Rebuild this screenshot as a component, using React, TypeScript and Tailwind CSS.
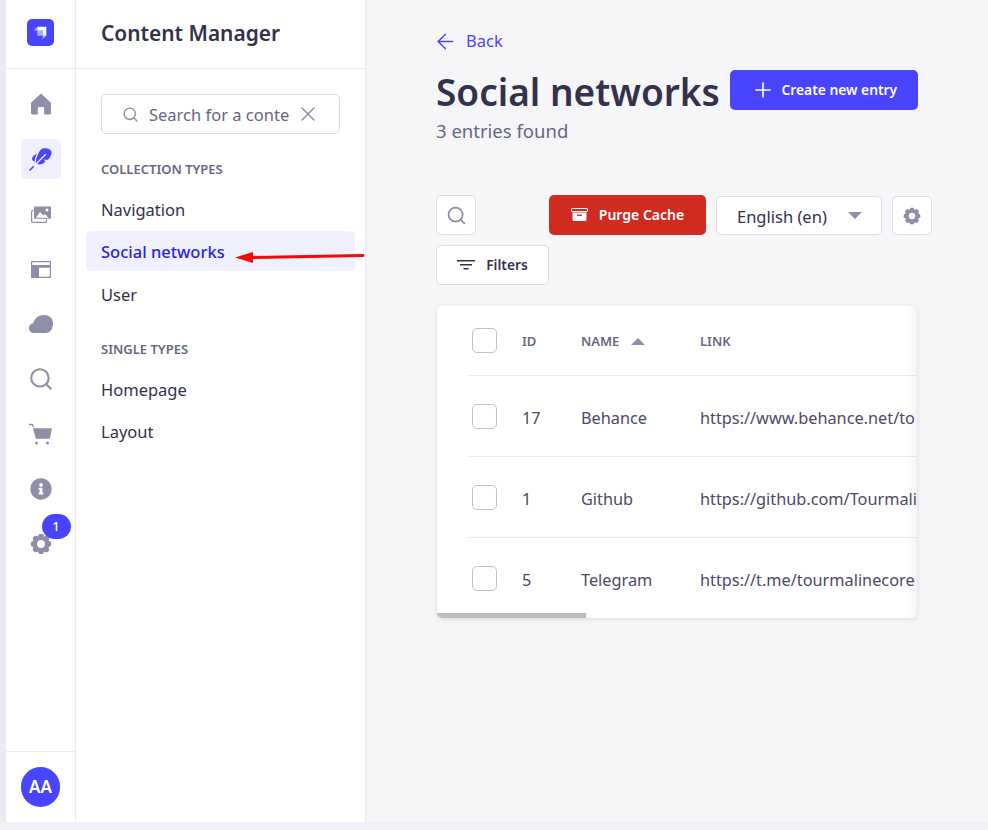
import { ArrowLeft, Plus, Search, X } from "lucide-react";
import { FaInfoCircle } from "react-icons/fa";

const railIcon = "h-[22px] w-[22px] text-[#8e8ea9]";

function HomeIcon() {
  return (
    <svg viewBox="0 0 24 24" className="h-[24px] w-[24px] text-[#8e8ea9]" fill="currentColor">
      <path d="M12 1.600 2.600 10.200c-.4.4-.6.8-.6 1.300v9.600c0 .8.6 1.400 1.400 1.400h5.400v-6.200c0-.8.6-1.400 1.400-1.400h3.600c.8 0 1.400.6 1.400 1.400v6.200h5.400c.8 0 1.400-.6 1.400-1.400v-9.600c0-.5-.2-.9-.6-1.300L12 1.600z" />
    </svg>
  );
}

function FeatherIcon() {
  return (
    <svg viewBox="0 0 24 24" className="h-[24px] w-[24px] text-[#4945ff]" fill="none">
      <path fill="currentColor" d="M13.500 1.500c4-1 8.600.4 9 3.600.3 2.800-1.500 6-3.700 7.600h-4.600l2.400 1.500c-1 1.400-3 3-5.400 3.200-1.700.1-3.500-.5-4.400-1.300 0-3 .8-6.400 2.400-9.200 1.200-2.600 2.600-4.800 4.300-5.400z" />
      <path fill="currentColor" d="M4.500 8.800 8 6.400c-1.400 2.600-2.400 5.800-2.500 8.600L3.200 13c-.4-1.600.2-3 1.300-4.200z" />
      <path stroke="currentColor" strokeWidth="1.600" strokeLinecap="round" d="M1 23 5 19" />
      <path stroke="#fff" strokeWidth="1.300" strokeLinecap="round" d="M5 19 16.500 7.500" />
    </svg>
  );
}

function MediaIcon() {
  return (
    <svg viewBox="0 0 20 17" className="h-[17px] w-[20px] text-[#8e8ea9]" fill="none">
      <rect x=".6" y="4.600" width="15" height="11.800" rx="1" stroke="currentColor" strokeWidth="1.200" />
      <rect x="2.400" y=".2" width="17.600" height="13.300" rx="1" fill="#fff" />
      <path fill="currentColor" d="M4 .6h15c.6 0 1 .4 1 1v10.200c0 .6-.4 1-1 1H4c-.6 0-1-.4-1-1V1.600c0-.6.4-1 1-1z" />
      <circle cx="16" cy="4" r="1.500" fill="#fff" />
      <path fill="#fff" d="M5 11.800 9 6l3.500 3.600 1.600-1.400 3.400 3.600z" />
    </svg>
  );
}

function LayoutIcon() {
  return (
    <svg viewBox="0 0 20 17" className="h-[17px] w-[20px] text-[#8e8ea9]" fill="none">
      <path fill="currentColor" d="M1 0h18c.6 0 1 .4 1 1v15c0 .6-.4 1-1 1H1c-.6 0-1-.4-1-1V1c0-.6.4-1 1-1z" />
      <path fill="#fff" d="M1.200 1.300h17.600v2.700H1.200zM8 6.800h10.800v9H8z" />
    </svg>
  );
}

function CloudIcon() {
  return (
    <svg viewBox="0 0 24 18" className="h-[18px] w-[24px] text-[#8e8ea9]" fill="currentColor">
      <path d="M15 0c5 0 9 3 9 8.500 0 5.500-3.200 9.500-7 9.500H5c-2.800 0-5-1.800-5-4.800 0-2.700 1.700-4.700 4.200-5C5.500 3.400 9.500 0 15 0z" />
    </svg>
  );
}

function CartIcon() {
  return (
    <svg viewBox="0 0 23 22" className="h-[22px] w-[23px] text-[#8e8ea9]" fill="currentColor">
      <path d="M0 .8h3c.6 0 1 .3 1.200.8L5 4h-1.400l-.6-1.700H0z" />
      <path d="M3.800 5.200H23l-2.200 10.600H7z" />
      <circle cx="7.500" cy="20" r="1.500" />
      <circle cx="18.500" cy="20" r="1.500" />
    </svg>
  );
}

function CogIcon({ size }: { size: string }) {
  const teeth = [0, 45, 90, 135, 180, 225, 270, 315];
  return (
    <svg viewBox="0 0 24 24" className={`${size} text-[#8e8ea9]`} fill="currentColor">
      {teeth.map((a) => (
        <rect key={a} x="9" y="1" width="6" height="22" rx="2.500" transform={`rotate(${a} 12 12)`} />
      ))}
      <circle cx="12" cy="12" r="8.500" />
      <circle cx="12" cy="12" r="4.300" fill="#fff" />
    </svg>
  );
}

function LogoIcon() {
  return (
    <div className="flex h-[27px] w-[27px] items-center justify-center rounded-[5px] bg-[#4945ff]">
      <svg viewBox="0 0 16 16" className="h-[17px] w-[17px]">
        <path fill="#fff" d="M5 2.500h8.500V11H10V6H5z" />
        <path fill="#fff" opacity=".55" d="M5 2.500V6H1.500zM10 6H5v5h5zM10 11v3.500L13.500 11z" />
      </svg>
    </div>
  );
}

function PurgeIcon() {
  return (
    <svg viewBox="0 0 17 13" className="h-[13px] w-[17px]">
      <rect x=".5" y=".5" width="16" height="3" rx=".6" fill="none" stroke="#fff" />
      <path fill="#fff" d="M1.500 4.500h14v7.300c0 .7-.5 1.200-1.200 1.200H2.700c-.7 0-1.200-.5-1.200-1.200z" />
      <rect x="6" y="6.600" width="5" height="1.300" fill="#d02b20" />
    </svg>
  );
}

function RailItem({ children, active }: { children: React.ReactNode; active?: boolean }) {
  return (
    <div className={`relative flex h-10 w-10 items-center justify-center rounded-[5px] ${active ? "bg-[#f0f0ff]" : ""}`}>
      {children}
    </div>
  );
}

function NavGroup({ title, items }: { title: string; items: string[] }) {
  return (
    <div>
      <p className="pl-[15px] text-[13px] leading-[20px] font-semibold text-[#666687]">{title}</p>
      <div className="mt-[9px] flex flex-col gap-[2.500px]">
        {items.map((item) => (
          <div
            key={item}
            className={`flex h-10 items-center rounded-[5px] pt-[4px] pl-[15px] text-[16.500px] ${
              item === "Social networks" ? "bg-[#f0f0ff] font-medium text-[#271fe0]" : "text-[#32324d]"
            }`}
          >
            {item}
          </div>
        ))}
      </div>
    </div>
  );
}

function Checkbox() {
  return <div className="h-[25px] w-[25px] shrink-0 rounded-[5px] border border-[#c0c0cf] bg-white" />;
}

const rows = [
  { id: "17", name: "Behance", link: "https://www.behance.net/to" },
  { id: "1", name: "Github", link: "https://github.com/Tourmali" },
  { id: "5", name: "Telegram", link: "https://t.me/tourmalinecore" },
];

export default function App() {
  return (
    <div className="flex h-[830px] w-[988px] flex-col overflow-hidden bg-[#f0f1f6] font-['Noto_Sans',sans-serif] text-[#32324d]">
      <div className="flex h-[822px]">
        <div className="w-1.5 bg-[#e8ebf5]" />

        {/* main rail */}
        <aside className="flex w-[70px] flex-col border-r border-[#eaeaef] bg-white">
          <div className="flex h-[69px] items-center justify-center border-b border-[#eaeaef] pb-[4px]">
            <LogoIcon />
          </div>
          <nav className="flex flex-1 flex-col items-center gap-[15px] pt-[15px]">
            <RailItem><HomeIcon /></RailItem>
            <RailItem active><FeatherIcon /></RailItem>
            <RailItem><MediaIcon /></RailItem>
            <RailItem><LayoutIcon /></RailItem>
            <RailItem><CloudIcon /></RailItem>
            <RailItem><Search className="h-[26px] w-[26px] text-[#8e8ea9]" strokeWidth={1.900} /></RailItem>
            <RailItem><CartIcon /></RailItem>
            <RailItem><FaInfoCircle className={railIcon} /></RailItem>
            <RailItem>
              <CogIcon size="h-[22px] w-[22px]" />
              <span className="absolute top-[-10px] right-[-10px] flex h-[25px] w-[29px] items-center justify-center rounded-full bg-[#4945ff] text-[13px] font-medium text-white">
                1
              </span>
            </RailItem>
          </nav>
          <div className="flex h-[71px] items-center justify-center border-t border-[#eaeaef]">
            <div className="flex h-10 w-[39px] items-center justify-center rounded-full bg-[#4945ff] text-[17px] font-semibold text-white">
              AA
            </div>
          </div>
        </aside>

        {/* sub nav */}
        <aside className="relative flex w-[290px] flex-col border-r border-[#eaeaef] bg-white">
          <div className="flex h-[69px] items-center border-b border-[#eaeaef] pl-[25px]">
            <h2 className="text-[20.900px] font-semibold">Content Manager</h2>
          </div>
          <div className="mx-[25px] mt-[25px] flex h-10 w-[239px] items-center rounded-[5px] border border-[#dcdce4] pl-[20px] text-[16.500px] text-[#666687]">
            <Search className="h-[17px] w-[17px] shrink-0 text-[#8e8ea9]" strokeWidth={2} />
            <span className="ml-[10px] w-[141px] pt-[2px] whitespace-nowrap">Search for a conte</span>
            <X className="ml-[6px] h-[24px] w-[24px] text-[#8e8ea9]" strokeWidth={1.500} />
          </div>
          <div className="mx-[10px] mt-[25px] flex flex-col gap-[26px]">
            <NavGroup title="COLLECTION TYPES" items={["Navigation", "Social networks", "User"]} />
            <NavGroup title="SINGLE TYPES" items={["Homepage", "Layout"]} />
          </div>
          {/* red annotation arrow */}
          <svg className="absolute top-[248px] left-[158px]" width="132" height="18" viewBox="0 0 132 18">
            <path d="M129 7.500 18 9.500" stroke="#f20a0a" strokeWidth="3" strokeLinecap="round" />
            <path d="M1 9.500 19 4v11z" fill="#f20a0a" />
          </svg>
        </aside>

        {/* content */}
        <main className="flex-1 bg-[#f6f6f9] pt-[30px] pl-[70px]">
          <div className="flex h-[22px] items-center text-[#4945ff]">
            <ArrowLeft className="-ml-[3px] h-[25px] w-[25px]" strokeWidth={1.400} />
            <span className="ml-[8px] text-[16.500px]">Back</span>
          </div>
          <div className="mt-[18px] flex h-10 items-center">
            <h1 className="mt-[4px] text-[37px] font-semibold whitespace-nowrap">Social networks</h1>
            <button className="ml-[10px] flex h-10 w-[188px] items-center justify-center gap-[7px] rounded-[5px] bg-[#4945ff] text-[13.800px] font-semibold text-white">
              <Plus className="h-[24px] w-[24px]" strokeWidth={1.600} />
              Create new entry
            </button>
          </div>
          <p className="mt-[7px] text-[18.500px] leading-[28px] text-[#666687]">3 entries found</p>

          <div className="mt-[50px] flex h-10 w-[496px] items-end">
            <button className="flex h-10 w-10 items-center justify-center rounded-[5px] border border-[#dcdce4] bg-white">
              <Search className="h-[21px] w-[21px] text-[#8e8ea9]" strokeWidth={2} />
            </button>
            <button className="ml-[73px] flex h-10 w-[157px] items-center justify-center gap-[11px] rounded-[5px] bg-[#d02b20] pb-[2px] text-[14px] font-semibold text-white">
              <PurgeIcon />
              Purge Cache
            </button>
            <div className="ml-[10px] flex h-[39px] w-[166px] items-center rounded-[5px] border border-[#dcdce4] bg-white pl-[20px] text-[16.500px]">
              <span className="pt-[4px]">English (en)</span>
              <div className="mr-[19px] ml-auto h-0 w-0 border-x-[7px] border-t-[7px] border-x-transparent border-t-[#8e8ea9]" />
            </div>
            <button className="ml-[10px] flex h-[39px] w-10 items-center justify-center rounded-[5px] border border-[#dcdce4] bg-white">
              <CogIcon size="h-[18px] w-[18px]" />
            </button>
          </div>

          <button className="mt-[10px] flex h-10 w-[113px] items-center justify-center gap-[11px] rounded-[5px] border border-[#dcdce4] bg-white text-[13.800px] font-semibold">
            <svg viewBox="0 0 18 10" className="h-[10px] w-[18px]" fill="#32324d">
              <path d="M0 0h18v1.500H0zM3 4h12v1.500H3zM6.500 8h5v1.500h-5z" />
            </svg>
            Filters
          </button>

          {/* table */}
          <div className="relative mt-[21px] ml-px h-[312px] w-[480px] overflow-hidden rounded-[5px] bg-white shadow-[0_1px_5px_rgba(33,33,52,0.12)]">
            <div className="ml-[30px] flex h-[70px] items-center border-b border-[#eaeaef] pl-[5px] text-[13px] font-semibold text-[#666687]">
              <Checkbox />
              <span className="ml-[25px] w-[59px] shrink-0 pt-[2px]">ID</span>
              <span className="flex w-[119px] shrink-0 items-center pt-[2px]">
                NAME
                <span className="ml-[12px] h-0 w-0 border-x-[7px] border-b-[7px] border-x-transparent border-b-[#8e8ea9]" />
              </span>
              <span className="pt-[2px]">LINK</span>
            </div>
            {rows.map((row) => (
              <div
                key={row.id}
                className="ml-[30px] flex h-[81px] items-center border-b border-[#eaeaef] pl-[5px] text-[16.300px] whitespace-nowrap text-[#4a4a6a] last:border-b-0"
              >
                <Checkbox />
                <span className="ml-[25px] w-[59px] shrink-0 pt-[5px]">{row.id}</span>
                <span className="w-[119px] shrink-0 pt-[5px]">{row.name}</span>
                <span className="shrink-0 pt-[5px]">{row.link}</span>
              </div>
            ))}
            <div className="absolute top-0 right-0 bottom-0 w-[10px] bg-gradient-to-l from-[rgba(33,33,52,0.05)] to-transparent" />
            <div className="absolute bottom-0 left-0 h-[5px] w-[149px] bg-[#bdbdbd]" />
          </div>
        </main>
      </div>
    </div>
  );
}
